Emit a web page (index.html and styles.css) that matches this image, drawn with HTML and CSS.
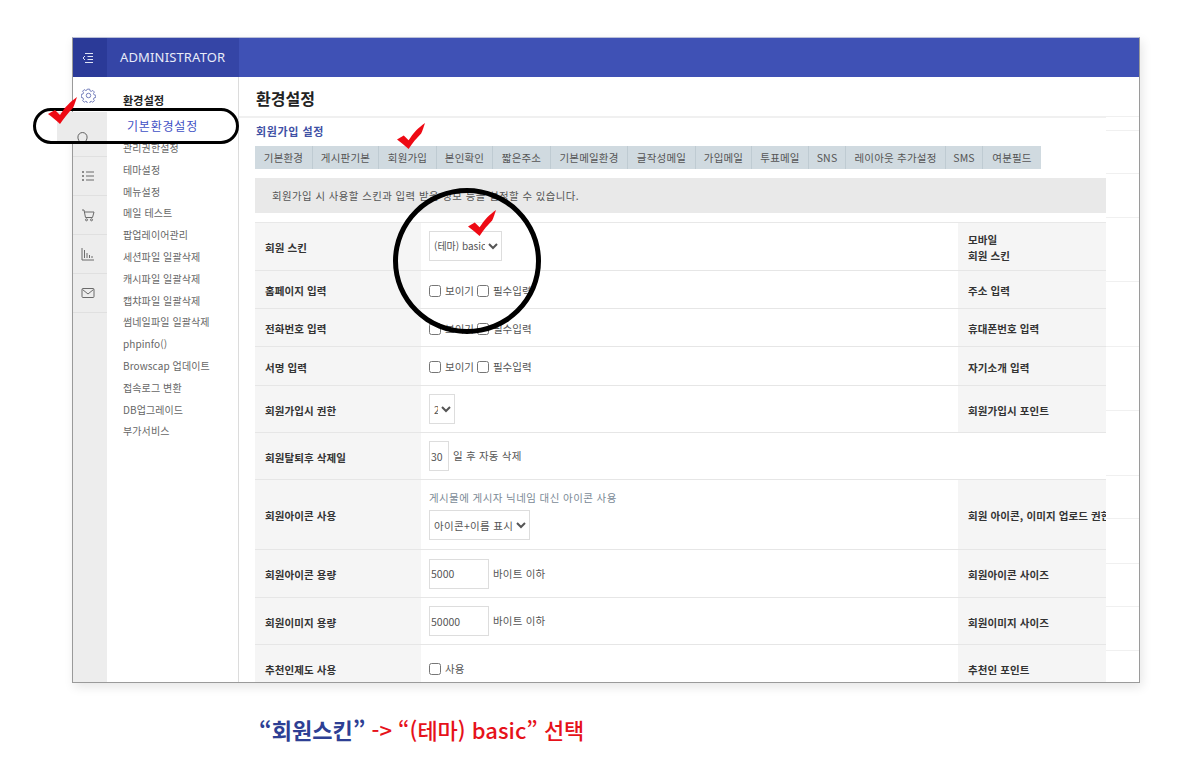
FILE: index.html
```html
<!DOCTYPE html>
<html lang="ko">
<head>
<meta charset="utf-8">
<title>환경설정</title>
<link rel="stylesheet" href="styles.css">
</head>
<body>
<div class="stage">
  <div class="window">
    <header class="topbar">
      <div class="toggle">
        <svg class="ico" viewBox="0 0 14 14"><path d="M4 2.500h8M6.500 5.500h5.500M6.500 8.500h5.500M4 11.500h8M4 5l-2 2 2 2" /></svg>
      </div>
      <div class="brand">ADMINISTRATOR</div>
      <div class="topfill"></div>
    </header>
    <div class="body">
      <nav class="rail">
        <div class="rail-item rail-active">
          <svg class="ico ico-dark" viewBox="0 0 16 16"><path d="M6.800 1.200h2.400l.4 1.800 1.400.6 1.600-1 1.700 1.700-1 1.600.6 1.400 1.800.4v2.400l-1.800.4-.6 1.400 1 1.600-1.700 1.700-1.600-1-1.400.6-.4 1.800H6.800l-.4-1.800-1.400-.6-1.600 1-1.700-1.700 1-1.600-.6-1.400-1.800-.4V6.800l1.800-.4.6-1.400-1-1.600 1.700-1.700 1.600 1 1.400-.6z"/><circle cx="8" cy="8" r="2.400"/></svg>
        </div>
        <div class="rail-item rail-bulb"></div>
        <div class="rail-item">
          <svg class="ico ico-gray" viewBox="0 0 14 14"><path d="M5 3h8M5 7h8M5 11h8"/><path class="dots" d="M1 3h2M1 7h2M1 11h2"/></svg>
        </div>
        <div class="rail-item">
          <svg class="ico ico-gray" viewBox="0 0 14 14"><path d="M1 2h2l1.500 7.500h7L13 4H3.500"/><circle cx="5.500" cy="11.800" r="1"/><circle cx="10.500" cy="11.800" r="1"/></svg>
        </div>
        <div class="rail-item">
          <svg class="ico ico-gray" viewBox="0 0 14 14"><path d="M1 1v12h12M3.500 11V3M6 11V6M8.500 11V8M11 11V9"/></svg>
        </div>
        <div class="rail-item">
          <svg class="ico ico-gray" viewBox="0 0 14 14"><rect x="1" y="2.500" width="12" height="9" rx="1"/><path d="M1.500 3.500L7 8l5.500-4.500"/></svg>
        </div>
      </nav>
      <aside class="sidebar">
        <div class="side-title">환경설정</div>
        <div class="side-current">기본환경설정</div>
        <ul class="side-list">
          <li>관리권한설정</li>
          <li>테마설정</li>
          <li>메뉴설정</li>
          <li>메일 테스트</li>
          <li>팝업레이어관리</li>
          <li>세션파일 일괄삭제</li>
          <li>캐시파일 일괄삭제</li>
          <li>캡챠파일 일괄삭제</li>
          <li>썸네일파일 일괄삭제</li>
          <li>phpinfo()</li>
          <li>Browscap 업데이트</li>
          <li>접속로그 변환</li>
          <li>DB업그레이드</li>
          <li>부가서비스</li>
        </ul>
      </aside>
      <main class="main">
        <h1 class="page-title">환경설정</h1>
        <div class="content">
          <h2 class="section-title">회원가입 설정</h2>
          <ul class="tabs">
            <li class="t59">기본환경</li>
            <li class="t66">게시판기본</li>
            <li class="t58">회원가입</li>
            <li class="t56">본인확인</li>
            <li class="t58">짧은주소</li>
            <li class="t77">기본메일환경</li>
            <li class="t68">글작성메일</li>
            <li class="t56">가입메일</li>
            <li class="t57">투표메일</li>
            <li class="t37">SNS</li>
            <li class="t100">레이아웃 추가설정</li>
            <li class="t37">SMS</li>
            <li class="t58">여분필드</li>
          </ul>
          <p class="notice">회원가입 시 사용할 스킨과 입력 받을 정보 등을 설정할 수 있습니다.</p>
          <table class="form">
            <colgroup><col class="c1"><col class="c2"><col class="c3"></colgroup>
            <tr class="r48">
              <th>회원 스킨</th>
              <td><select class="sel sel-skin"><option>(테마) basic</option></select></td>
              <th>모바일<br>회원 스킨</th>
            </tr>
            <tr class="r38">
              <th>홈페이지 입력</th>
              <td><label class="chk"><input type="checkbox">보이기</label> <label class="chk"><input type="checkbox">필수입력</label></td>
              <th>주소 입력</th>
            </tr>
            <tr class="r38">
              <th>전화번호 입력</th>
              <td><label class="chk"><input type="checkbox">보이기</label> <label class="chk"><input type="checkbox">필수입력</label></td>
              <th>휴대폰번호 입력</th>
            </tr>
            <tr class="r39">
              <th>서명 입력</th>
              <td><label class="chk"><input type="checkbox">보이기</label> <label class="chk"><input type="checkbox">필수입력</label></td>
              <th>자기소개 입력</th>
            </tr>
            <tr class="r47">
              <th>회원가입시 권한</th>
              <td><select class="sel sel-level"><option>2</option></select></td>
              <th>회원가입시 포인트</th>
            </tr>
            <tr class="r47">
              <th>회원탈퇴후 삭제일</th>
              <td colspan="2"><input class="txt txt-s" type="text" value="30"><span class="unit">일 후 자동 삭제</span></td>
            </tr>
            <tr class="r70">
              <th>회원아이콘 사용</th>
              <td>
                <div class="help">게시물에 게시자 닉네임 대신 아이콘 사용</div>
                <select class="sel sel-icon"><option>아이콘+이름 표시</option></select>
              </td>
              <th class="nowrap">회원 아이콘, 이미지 업로드 권한</th>
            </tr>
            <tr class="r48">
              <th>회원아이콘 용량</th>
              <td><input class="txt txt-m" type="text" value="5000"><span class="unit">바이트 이하</span></td>
              <th>회원아이콘 사이즈</th>
            </tr>
            <tr class="r47">
              <th>회원이미지 용량</th>
              <td><input class="txt txt-m" type="text" value="50000"><span class="unit">바이트 이하</span></td>
              <th>회원이미지 사이즈</th>
            </tr>
            <tr class="r47">
              <th>추천인제도 사용</th>
              <td><label class="chk"><input type="checkbox">사용</label></td>
              <th>추천인 포인트</th>
            </tr>
          </table>
        </div>
      </main>
      <div class="strip"><i></i><i></i><i></i><i></i><i></i><i></i><i></i><i></i><i></i><i></i><i></i><i></i></div>
    </div>
  </div>
  <p class="caption"><span class="cap-blue">“회원스킨”</span> <span class="cap-red">-&gt; “(테마) basic” 선택</span></p>

  <div class="pill">
    <div class="patch">
      <svg class="bulb" viewBox="0 0 12 16"><path d="M3.500 13C2.500 10.500 1 9.500 1 6.500a5 5 0 0 1 10 0c0 3-1.500 4-2.500 6.500z"/></svg>
    </div>
  </div>
  <div class="ring"></div>
  <svg class="check check-a" viewBox="0 0 30 27"><path d="M0 17L7 13 12 18C17 10 22 5 29 0 27 6 26 9 25 11 20 16 16 21 12 27 8 23 4 20 0 17Z"/></svg>
  <svg class="check check-b" viewBox="0 0 30 27"><path d="M0 17L7 13 12 18C17 10 22 5 29 0 27 6 26 9 25 11 20 16 16 21 12 27 8 23 4 20 0 17Z"/></svg>
  <svg class="check check-c" viewBox="0 0 30 27"><path d="M0 17L7 13 12 18C17 10 22 5 29 0 27 6 26 9 25 11 20 16 16 21 12 27 8 23 4 20 0 17Z"/></svg>
</div>
</body>
</html>
```

FILE: styles.css
```css
* { box-sizing: border-box; }
html, body { margin: 0; padding: 0; background: #fff; }
body {
  font-family: "Noto Sans CJK KR", "Noto Sans", sans-serif;
  color: #333;
  width: 1198px;
  height: 783px;
  overflow: hidden;
}
.stage { position: relative; padding: 37px 0 0 72px; height: 783px; }
.window {
  width: 1068px;
  height: 646px;
  border: 1px solid #9a9a9a;
  border-top-color: #b9bfd8;
  overflow: hidden;
  box-shadow: 2px 4px 10px rgba(0,0,0,.10);
  background: #fff;
  display: flex;
  flex-direction: column;
}
.topbar { display: flex; height: 39px; flex: none; }
.toggle { width: 34px; background: #2b3a98; display: flex; align-items: center; justify-content: center; padding-right: 4px; }
.toggle .ico { stroke: #dfe3f5; }
.brand {
  width: 132px; background: #3545a6; color: #e8ebf8;
  font: 400 13px/39px "Noto Sans", sans-serif;
  padding-left: 13px;
  letter-spacing: .15px;
}
.topfill { flex: 1; background: #3f51b5; }
.ico { width: 14px; height: 14px; fill: none; stroke: #777; stroke-width: 1; display: block; }
.ico-dark { stroke: #6d78b8; width: 15px; height: 15px; }
.ico-gray { stroke: #6a6a6a; }
.dots { stroke-width: 1.500; }
.body { display: flex; flex: 1; min-height: 0; }
.rail { width: 34px; flex: none; background: #ededed; }
.rail-item {
  height: 39px;
  display: flex; align-items: center; justify-content: center;
  padding-right: 4px;
  border-bottom: 1px solid #e0e0e0;
}
.rail-active { height: 37px; background: #fff; border-bottom: 0; }
.rail-bulb { height: 43px; }
.sidebar { width: 132px; flex: none; border-right: 1px solid #dcdcdc; padding-top: 16px; background: #fff; }
.side-title { font-size: 11px; font-weight: 700; line-height: 14px; color: #222; padding-left: 16px; letter-spacing: .2px; }
.side-current { font-size: 12px; line-height: 18px; color: #3f51c5; padding: 10px 0 0 20px; letter-spacing: .8px; }
.side-list { list-style: none; margin: 2px 0 0; padding: 0 0 0 16px; }
.side-list li { font-size: 10px; line-height: 21.800px; height: 21.800px; color: #666; white-space: nowrap; letter-spacing: .1px; }
.main { width: 867px; flex: none; min-width: 0; overflow: hidden; }
.page-title {
  margin: 0; height: 41px;
  font-size: 16px; font-weight: 700; line-height: 39px; color: #222;
  padding: 2px 0 0 17px;
  border-bottom: 2px solid #f0f0f0;
}
.content { padding: 6px 0 0 16px; }
.section-title { margin: 0; font-size: 11px; font-weight: 700; line-height: 14px; color: #3f51a5; padding-left: 1px; letter-spacing: .6px; }
.tabs { list-style: none; display: flex; margin: 8px 0 0; padding: 0; height: 23px; width: max-content; background: #d0dae0; }
.tabs li { font-size: 10.500px; line-height: 23px; text-align: center; color: #555; border-right: 1px solid #bfcbd2; white-space: nowrap; letter-spacing: .2px; }
.tabs li:last-child { border-right: 0; }
.t37 { width: 37px; } .t56 { width: 56px; } .t57 { width: 57px; } .t58 { width: 58px; } .t59 { width: 58px; }
.t66 { width: 66px; } .t68 { width: 68px; } .t77 { width: 77px; } .t100 { width: 100px; }
.notice { margin: 9px 0 0; height: 35px; background: #e9e9e9; font-size: 10.400px; line-height: 35px; color: #555; padding-left: 17px; letter-spacing: .45px; }
.form { width: 851px; margin-top: 9px; border-collapse: collapse; table-layout: fixed; border-top: 1px solid #e8e8e8; }
.c1 { width: 166px; } .c2 { width: 537px; } .c3 { width: 148px; }
.form th {
  background: #f5f5f5; text-align: left; font-size: 10.500px; font-weight: 700; line-height: 16px; color: #333;
  padding: 3px 0 0 10px; letter-spacing: .1px;
}
.form td { font-size: 10.500px; line-height: 14px; color: #555; padding: 0 0 0 8px; }
.form tr { border-bottom: 1px solid #e6e6e6; }
.nowrap { white-space: nowrap; overflow: hidden; }
.r38 { height: 38px; } .r39 { height: 39px; } .r47 { height: 47px; } .r48 { height: 48px; } .r70 { height: 70px; }
.sel {
  height: 30px; border: 1px solid #ddd; background: #fff; border-radius: 0;
  font: 400 10px "Noto Sans CJK KR", sans-serif; color: #555; padding: 0; display: block;
}
.sel-skin { width: 73px; margin-bottom: 2px; }
.sel-level { width: 26px; }
.sel-icon { width: 101px; font-size: 10.500px; letter-spacing: .3px; }
.txt { height: 30px; border: 1px solid #ddd; padding: 0 1px; font: 400 10.500px "Noto Sans CJK KR", sans-serif; color: #555; vertical-align: middle; outline: 0; }
.txt-s { width: 20px; }
.txt-m { width: 60px; }
.unit { margin-left: 4px; vertical-align: middle; letter-spacing: .2px; }
.chk { display: inline-flex; align-items: center; gap: 4px; color: #555; margin-top: 4px; }
.chk input { margin: 0; width: 12px; height: 12px; }
.help { color: #7b8a96; line-height: 14px; margin: 2px 0 5px; letter-spacing: .4px; }
.strip {
  flex: 1;
  display: grid;
  grid-template-rows: 40px 14px 43px 44px 64px 65px 64px 65px 43px 45px 43px 44px;
}
.strip i { display: block; border-bottom: 1px solid #f0f0f0; }
.caption { margin: 30px 0 0 187px; font-size: 22px; font-weight: 700; line-height: 32px; white-space: nowrap; letter-spacing: 0; }
.cap-blue { color: #2d3f94; }
.cap-red { color: #e6121a; font-weight: 500; }
.pill {
  position: absolute; left: 33px; top: 108px; width: 206px; height: 36px;
  border: 3.500px solid #000; border-radius: 18px; overflow: hidden;
  pointer-events: none;
}
.patch { position: absolute; left: 21px; top: 1px; width: 50px; height: 30px; background: #ebebeb; }
.bulb { position: absolute; left: 20px; top: 19px; width: 11px; height: 15px; fill: none; stroke: #555; stroke-width: 1; }
.ring {
  position: absolute; left: 393px; top: 188px; width: 148px; height: 146px;
  border: 5px solid #000; border-radius: 50%;
}
.check { position: absolute; fill: #ee0a14; }
.check-a { left: 48px; top: 97px; width: 30px; height: 27px; }
.check-b { left: 397px; top: 122px; width: 29px; height: 28px; }
.check-c { left: 468px; top: 209px; width: 29px; height: 28px; }
```
